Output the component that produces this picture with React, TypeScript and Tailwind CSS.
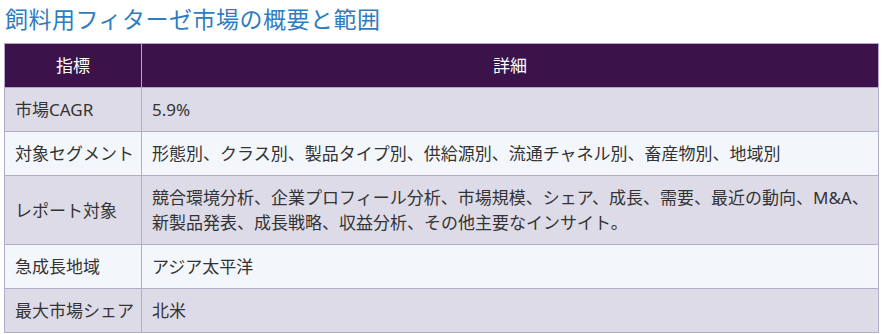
import React from "react";

const rows: { k: string; v: string }[] = [
  { k: "市場CAGR", v: "5.9%" },
  { k: "対象セグメント", v: "形態別、クラス別、製品タイプ別、供給源別、流通チャネル別、畜産物別、地域別" },
  {
    k: "レポート対象",
    v: "競合環境分析、企業プロフィール分析、市場規模、シェア、成長、需要、最近の動向、M&A、新製品発表、成長戦略、収益分析、その他主要なインサイト。",
  },
  { k: "急成長地域", v: "アジア太平洋" },
  { k: "最大市場シェア", v: "北米" },
];

export default function App() {
  return (
    <div
      className="w-[883px] h-[334px] overflow-hidden bg-white px-[4px]"
      style={{ fontFamily: '"Noto Sans", "Noto Sans CJK JP", sans-serif' }}
    >
      <h2 className="text-[23px] leading-[30px] text-[#2f7dbf] pt-[4px] pl-[1px] mb-[9px] font-normal tracking-[0.5px]">
        飼料用フィターゼ市場の概要と範囲
      </h2>
      <table className="w-[875px] table-fixed border-collapse text-[17px] leading-[25px] text-[#333333]">
        <colgroup>
          <col className="w-[137px]" />
          <col />
        </colgroup>
        <thead>
          <tr className="bg-[#3b124a] text-white">
            <th className="border border-[#b3a6c9] pt-[9px] pb-[9px] font-normal text-center">指標</th>
            <th className="border border-[#b3a6c9] pt-[9px] pb-[9px] font-normal text-center">詳細</th>
          </tr>
        </thead>
        <tbody>
          {rows.map((r, i) => (
            <tr key={i} className={i % 2 === 0 ? "bg-[#dedbe8]" : "bg-[#f3f7fb]"}>
              <td className="border border-[#b3acc6] pl-[10px] pr-0 pt-[9px] pb-[9px] align-middle whitespace-nowrap overflow-visible">
                {r.k}
              </td>
              <td className="border border-[#b3acc6] pl-[10px] pr-[2px] pt-[9px] pb-[9px] align-middle">
                {r.v}
              </td>
            </tr>
          ))}
        </tbody>
      </table>
    </div>
  );
}
